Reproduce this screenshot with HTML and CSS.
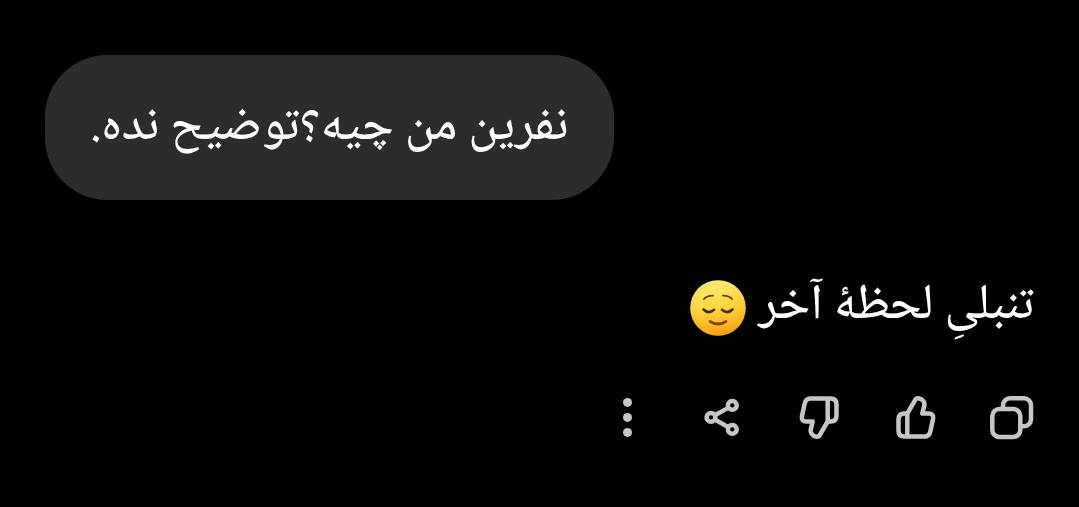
FILE: index.html
```html
<!DOCTYPE html>
<html lang="fa" dir="rtl">
<head>
    <meta charset="UTF-8">
    <meta name="viewport" content="width=device-width, initial-scale=1">
    <title>گفتگو</title>
    <link rel="stylesheet" href="styles.css">
</head>
<body>
    <main class="chat">
        <div class="bubble">نفرین من چیه؟توضیح نده.</div>

        <div class="reply">
            <p class="reply-text">
                <span>تنبلیِ لحظهٔ آخر</span>
                <svg class="emoji" viewBox="0 0 56 56" role="img" aria-label="relieved face">
                    <defs>
                        <linearGradient id="face" x1="0.4" y1="0" x2="0.6" y2="1">
                            <stop offset="0" stop-color="#fff08a"/>
                            <stop offset="0.5" stop-color="#ffd43a"/>
                            <stop offset="1" stop-color="#f7960e"/>
                        </linearGradient>
                        <radialGradient id="glow" cx="0.5" cy="0.45" r="0.55">
                            <stop offset="0.6" stop-color="#ffdf40" stop-opacity="0.2"/>
                            <stop offset="1" stop-color="#ffae20" stop-opacity="0.3"/>
                        </radialGradient>
                    </defs>
                    <circle cx="28" cy="28" r="27.8" fill="url(#face)"/>
                    <circle cx="28" cy="28" r="27.8" fill="url(#glow)"/>
                    <g fill="none" stroke-linecap="round">
                        <path d="M14 19Q17 15.500 23 15.600M33 15.600Q39 15.500 42 19" stroke="#6a400a" stroke-width="1.900"/>
                        <path d="M13.500 29.500Q18.500 34.500 24 29.800M32 29.800Q37.500 34.500 42.500 29.500" stroke="#4a2e0c" stroke-width="2.600"/>
                        <path d="M20 41.500Q28 46.500 36 41.500" stroke="#8a4408" stroke-width="2.800"/>
                    </g>
                </svg>
            </p>

            <div class="actions">
                <button type="button" aria-label="کپی">
                    <svg viewBox="0 0 44 44">
                        <rect x="2.300" y="13" width="28" height="28" rx="7"/>
                        <path d="M13 12V9.300a7 7 0 0 1 7-7h14a7 7 0 0 1 7 7v14a7 7 0 0 1-7 7h-3"/>
                    </svg>
                </button>
                <button type="button" aria-label="پسندیدم">
                    <svg viewBox="0 0 44 44">
                        <path d="M13.300 17.500L21 4.300Q22.200 2 24.500 2.300C29 3 31 6.500 30.300 9.500L28.300 17.500H34.500Q40 17.500 39 23L36.300 35.500Q35.200 40.600 30.500 40.600H10.500Q4.500 40.600 4.500 34.500V23.500Q4.500 17.500 10.500 17.500H13.300V40.600"/>
                    </svg>
                </button>
                <button type="button" aria-label="نپسندیدم">
                    <svg viewBox="0 0 44 44">
                        <path transform="rotate(180 21.500 21.500)" d="M13.300 17.500L21 4.300Q22.200 2 24.500 2.300C29 3 31 6.500 30.300 9.500L28.300 17.500H34.500Q40 17.500 39 23L36.300 35.500Q35.200 40.600 30.500 40.600H10.500Q4.500 40.600 4.500 34.500V23.500Q4.500 17.500 10.500 17.500H13.300V40.600"/>
                    </svg>
                </button>
                <button type="button" aria-label="اشتراک‌گذاری">
                    <svg viewBox="0 0 44 44">
                        <circle cx="9" cy="21.400" r="4.400"/>
                        <circle cx="30.300" cy="9.400" r="4.400"/>
                        <circle cx="30.300" cy="33.400" r="4.400"/>
                        <path d="M13 19.200L26.500 11.600M13 23.600L26.500 31.200"/>
                    </svg>
                </button>
                <button type="button" aria-label="بیشتر">
                    <svg class="dots" viewBox="0 0 44 44">
                        <circle cx="21.500" cy="6.400" r="4.500"/>
                        <circle cx="21.500" cy="21.400" r="4.500"/>
                        <circle cx="21.500" cy="36.400" r="4.500"/>
                    </svg>
                </button>
            </div>
        </div>
    </main>
</body>
</html>
```
FILE: styles.css
```css
body {
    margin: 0;
    background-color: #000;
    color: #fff;
    font-family: "Noto Naskh Arabic UI", "Noto Naskh Arabic", "Noto Sans Arabic", "Noto Sans", "DejaVu Sans", sans-serif;
    font-size: 50px;
    font-weight: 500;
    line-height: 55px;
}
.chat {
    display: flex;
    flex-direction: column;
    padding: 55px 45px;
}
.bubble {
    align-self: flex-end;
    padding: 45px;
    border-radius: 62px;
    background-color: #2c2c2c;
}
.reply {
    margin-top: 80px;
}
.reply-text {
    display: flex;
    align-items: flex-start;
    gap: 12px;
    margin: 0;
    line-height: 52px;
}
.emoji {
    width: 56px;
    height: 56px;
}
.actions {
    display: flex;
    gap: 52px;
    margin-top: 60px;
}
.actions button {
    width: 44px;
    height: 44px;
    padding: 0;
    border: none;
    background: none;
    color: #c6c6c6;
    cursor: pointer;
}
.actions svg {
    display: block;
    width: 44px;
    height: 44px;
    fill: none;
    stroke: currentColor;
    stroke-width: 4.5;
    stroke-linejoin: round;
}
.actions .dots {
    fill: currentColor;
    stroke: none;
}
```
